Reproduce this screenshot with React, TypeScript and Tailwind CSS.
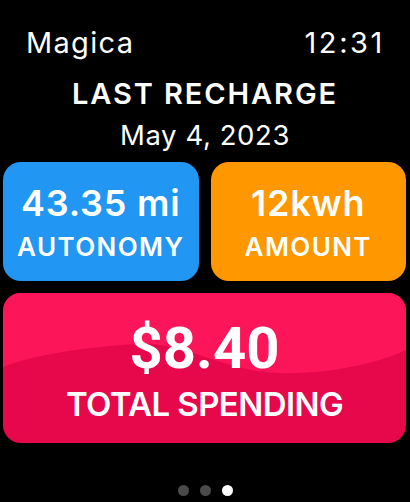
import React from 'react';

const font = { fontFamily: 'Inter, "Noto Sans", sans-serif' };
const numFont = { fontFamily: 'Roboto, Inter, sans-serif' };

const StatCard = ({ value, label, color }: { value: string; label: string; color: string }) => {
  return (
    <div className={`flex-1 h-[119px] rounded-[18px] ${color} flex flex-col items-center pt-[23px] text-white`}>
      <div className="text-[36px] leading-[36px] font-semibold tracking-[0.8px]">{value}</div>
      <div className="text-[26px] leading-[26px] font-semibold mt-[13px] tracking-[1.4px]">{label}</div>
    </div>
  );
};

const App = () => {
  return (
    <div className="w-[410px] h-[502px] bg-black text-white overflow-hidden" style={font}>
      <div className="flex justify-between pl-[26px] pt-[28px] pr-[27px]">
        <span className="text-[29px] leading-[29px] tracking-[1.3px]">Magica</span>
        <span className="text-[29px] leading-[29px] tracking-[2.6px] mr-[-2px]">12:31</span>
      </div>

      <div className="flex flex-col items-center">
        <div className="text-[29px] leading-[29px] font-semibold mt-[22px] tracking-[1.9px]">LAST RECHARGE</div>
        <div className="text-[27.5px] leading-[28px] mt-[13px] tracking-[0.6px]">May 4, 2023</div>
      </div>

      <div className="flex gap-[12px] pl-[3px] pr-[4px] mt-[13px]">
        <StatCard value="43.35 mi" label="AUTONOMY" color="bg-[#2196f3]" />
        <StatCard value="12kwh" label="AMOUNT" color="bg-[#ff9800]" />
      </div>

      <div className="pl-[3px] pr-[4px] mt-[12px]">
        <div className="relative h-[150px] rounded-[18px] bg-[#e6084b] overflow-hidden">
          {/* glossy highlight */}
          <svg className="absolute inset-0" width="403" height="150" viewBox="0 0 403 150" preserveAspectRatio="none">
            <path
              d="M0,0 H403 V57 C380,68 330,82 275,80 C220,78 180,48 135,51 C80,54 30,62 0,74 Z"
              fill="#fd1559"
            />
          </svg>
          <div className="relative flex flex-col items-center pt-[26px]">
            <div className="text-[58px] leading-[58px] font-bold" style={numFont}>$8.40</div>
            <div className="text-[33px] leading-[33px] font-semibold mt-[11px] tracking-[-0.6px]">TOTAL SPENDING</div>
          </div>
        </div>
      </div>

      <div className="flex justify-center gap-[11px] mt-[42px] pl-[1px]">
        <div className="w-[11px] h-[11px] rounded-full bg-[#4a4a4a]" />
        <div className="w-[11px] h-[11px] rounded-full bg-[#4a4a4a]" />
        <div className="w-[11px] h-[11px] rounded-full bg-white" />
      </div>
    </div>
  );
};

export default App;
